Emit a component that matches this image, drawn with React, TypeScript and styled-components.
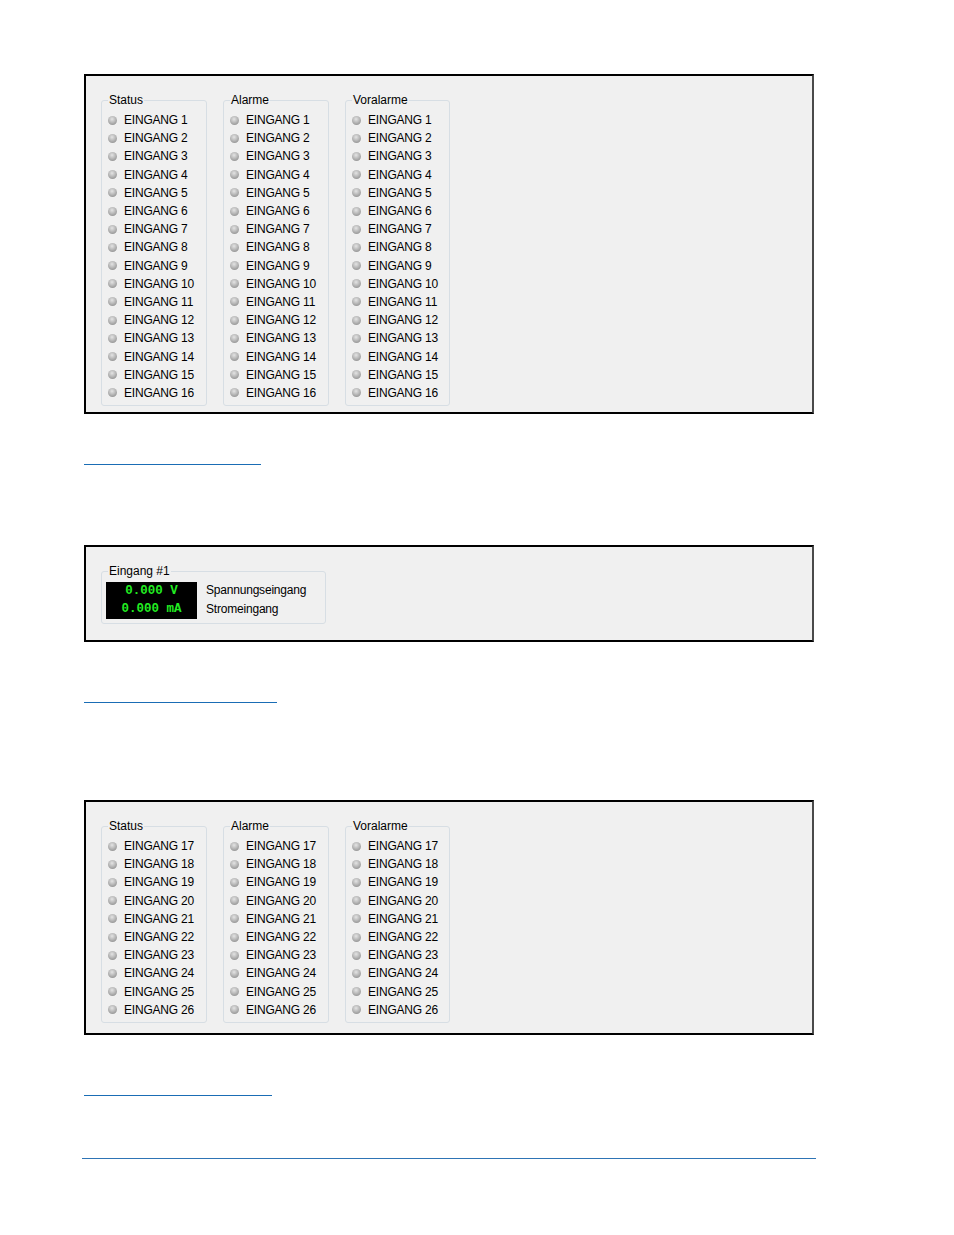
import React from "react";
import styled, { createGlobalStyle } from "styled-components";

const GlobalStyle = createGlobalStyle`
  html, body {
    margin: 0;
    padding: 0;
    background: #ffffff;
  }
  body {
    font-family: "Liberation Sans", Arial, sans-serif;
    -webkit-font-smoothing: none;
  }
`;

const Page = styled.div`
  width: 954px;
  min-height: 1235px;
  box-sizing: border-box;
  padding: 74px 0 0 84px;
  display: flex;
  flex-direction: column;
  align-items: flex-start;
`;

const Panel = styled.div<{ $padBottom: number; $gapAfter: number }>`
  width: 730px;
  box-sizing: border-box;
  background: #f0f0f0;
  border: 2px solid #000;
  border-right-color: #4a4a4a;
  padding: 17px 0 ${(p) => p.$padBottom}px 15px;
  margin-bottom: ${(p) => p.$gapAfter}px;
  display: flex;
  gap: 16px;
  align-items: flex-start;
`;

const GroupBox = styled.fieldset<{ $width: number }>`
  margin: 0;
  width: ${(p) => p.$width}px;
  box-sizing: border-box;
  border: 1px solid #d7dee4;
  border-radius: 3px;
  padding: 4px 0 3px 6px;
  min-inline-size: 0;
`;

const Legend = styled.legend`
  padding: 0 1px;
  font-size: 12px;
  line-height: 14px;
  color: #000;
`;

const LedRow = styled.div`
  display: flex;
  align-items: center;
  height: 18.2px;
  font-size: 12px;
  letter-spacing: -0.2px;
  color: #000;
  white-space: nowrap;
`;

const Led = styled.span`
  width: 9px;
  height: 9px;
  border-radius: 50%;
  margin-right: 7px;
  flex: none;
  background: radial-gradient(circle at 45% 35%, #e4e4e4 0%, #b8b8b8 45%, #808080 100%);
`;

const ReadoutBody = styled.div`
  display: flex;
  align-items: center;
  gap: 9px;
  margin: -1px 0 0 -2px;
  padding-bottom: 1px;
`;

const Display = styled.div`
  width: 91px;
  background: #000;
  color: #22ee22;
  font-family: "Liberation Mono", "Courier New", monospace;
  font-weight: bold;
  font-size: 12.5px;
  text-align: center;
  white-space: pre;
`;

const ReadoutLine = styled.div`
  line-height: 18.5px;
`;

const LabelList = styled.div`
  font-size: 12px;
  letter-spacing: -0.2px;
  color: #000;
`;

const LabelLine = styled.div`
  line-height: 19px;
`;

const LinkLine = styled.div<{ $width: number; $gapAfter: number }>`
  width: ${(p) => p.$width}px;
  height: 1px;
  background: #1a6db5;
  margin-bottom: ${(p) => p.$gapAfter}px;
`;

const FooterRule = styled.div`
  width: 734px;
  height: 1px;
  margin-left: -2px;
  background: #2e74b5;
`;

const groups = [
  { title: "Status", width: 106 },
  { title: "Alarme", width: 106 },
  { title: "Voralarme", width: 105 },
];

function InputPanel({
  from,
  to,
  padBottom,
  gapAfter,
}: {
  from: number;
  to: number;
  padBottom: number;
  gapAfter: number;
}) {
  const nums = Array.from({ length: to - from + 1 }, (_, i) => from + i);
  return (
    <Panel $padBottom={padBottom} $gapAfter={gapAfter}>
      {groups.map((g) => (
        <GroupBox key={g.title} $width={g.width}>
          <Legend>{g.title}</Legend>
          {nums.map((n) => (
            <LedRow key={n}>
              <Led />
              EINGANG {n}
            </LedRow>
          ))}
        </GroupBox>
      ))}
    </Panel>
  );
}

export default function App() {
  return (
    <>
      <GlobalStyle />
      <Page>
        <InputPanel from={1} to={16} padBottom={6} gapAfter={50} />
        <LinkLine $width={177} $gapAfter={80} />

        <Panel $padBottom={16} $gapAfter={60}>
          <GroupBox $width={225}>
            <Legend>Eingang #1</Legend>
            <ReadoutBody>
              <Display>
                <ReadoutLine>0.000 V</ReadoutLine>
                <ReadoutLine>0.000 mA</ReadoutLine>
              </Display>
              <LabelList>
                <LabelLine>Spannungseingang</LabelLine>
                <LabelLine>Stromeingang</LabelLine>
              </LabelList>
            </ReadoutBody>
          </GroupBox>
        </Panel>
        <LinkLine $width={193} $gapAfter={97} />

        <InputPanel from={17} to={26} padBottom={10} gapAfter={60} />
        <LinkLine $width={188} $gapAfter={62} />

        <FooterRule />
      </Page>
    </>
  );
}
